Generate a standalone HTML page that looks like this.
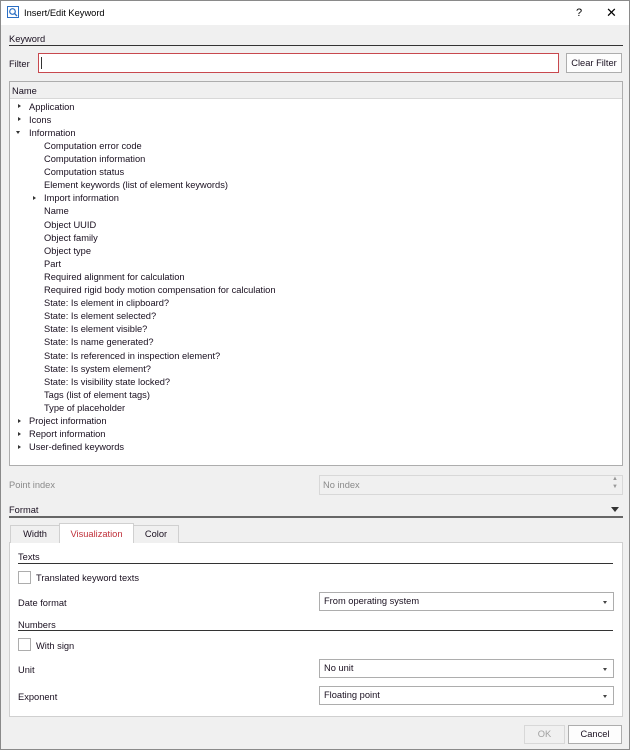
<!DOCTYPE html>
<html><head><style>
*{margin:0;padding:0;box-sizing:border-box}
body{width:630px;height:750px;background:#f0f0f0;font-family:"Liberation Sans",sans-serif;font-size:9.3px;color:#1a1020;position:relative;overflow:hidden;border:1px solid #8a8a8a}
.a{position:absolute;white-space:nowrap}
.t{position:absolute;white-space:nowrap;line-height:13.1px}
.line{position:absolute;height:1px;background:#333}
.box{position:absolute;background:#fff;border:1px solid #adadad}
.combo{position:absolute;background:#fff;border:1px solid #adadad;padding-left:4px;line-height:17px}
.combo:after{content:"";position:absolute;right:6px;top:8px;border-left:2.5px solid transparent;border-right:2.5px solid transparent;border-top:3px solid #444}
.btn{position:absolute;background:#fdfdfd;border:1px solid #adadad;text-align:center;line-height:17px}
.arr{position:absolute;width:0;height:0}
.r{border-top:2.5px solid transparent;border-bottom:2.5px solid transparent;border-left:3px solid #333}
.d{border-left:2.5px solid transparent;border-right:2.5px solid transparent;border-top:3px solid #333}
.cb{position:absolute;width:13px;height:13px;background:#fff;border:1px solid #adadad}
</style></head><body>
<div class="a" style="left:0;top:0;width:628px;height:24px;background:#fff"></div>
<svg class="a" style="left:6px;top:5px" width="12" height="12"><rect x=".5" y=".5" width="11" height="11" fill="#fff" stroke="#2b6fc4"/><circle cx="5.5" cy="5.5" r="2.8" fill="none" stroke="#2b6fc4" stroke-width="1.2"/><line x1="7.5" y1="7.5" x2="10" y2="10" stroke="#2b6fc4" stroke-width="1.3"/></svg>
<div class="a" style="left:23px;top:7px;color:#000">Insert/Edit Keyword</div>
<div class="a" style="left:575px;top:6px;font-size:11px;color:#000">?</div>
<div class="a" style="left:605px;top:4px;font-size:13px;color:#000">✕</div>

<div class="a" style="left:8px;top:33px">Keyword</div>
<div class="line" style="left:8px;top:44px;width:614px"></div>
<div class="a" style="left:8px;top:58px">Filter</div>
<div class="box" style="left:37px;top:52px;width:521px;height:20px;border-color:#c8484e"><div style="position:absolute;left:2px;top:3px;width:1px;height:12px;background:#333"></div></div>
<div class="btn" style="left:565px;top:52px;width:56px;height:20px;line-height:18px">Clear Filter</div>

<div class="box" style="left:8px;top:80px;width:614px;height:385px"></div>
<div class="a" style="left:9px;top:81px;width:612px;height:17px;background:#f0f0f0;border-bottom:1px solid #d8d8d8"></div>
<div class="a" style="left:11px;top:85px">Name</div>
<div class="arr r" style="left:17px;top:103px"></div>
<div class="arr r" style="left:17px;top:116px"></div>
<div class="arr d" style="left:15px;top:130px"></div>
<div class="arr r" style="left:32px;top:195px"></div>
<div class="arr r" style="left:17px;top:418px"></div>
<div class="arr r" style="left:17px;top:431px"></div>
<div class="arr r" style="left:17px;top:444px"></div>
<div class="t" style="left:28px;top:100px">Application<br>Icons<br>Information</div>
<div class="t" style="left:43px;top:139px">Computation error code<br>Computation information<br>Computation status<br>Element keywords (list of element keywords)<br>Import information<br>Name<br>Object UUID<br>Object family<br>Object type<br>Part<br>Required alignment for calculation<br>Required rigid body motion compensation for calculation<br>State: Is element in clipboard?<br>State: Is element selected?<br>State: Is element visible?<br>State: Is name generated?<br>State: Is referenced in inspection element?<br>State: Is system element?<br>State: Is visibility state locked?<br>Tags (list of element tags)<br>Type of placeholder</div>
<div class="t" style="left:28px;top:414px">Project information<br>Report information<br>User-defined keywords</div>

<div class="a" style="left:8px;top:479px;color:#8a8a8a">Point index</div>
<div class="a" style="left:318px;top:474px;width:304px;height:20px;border:1px solid #d8d8d8;background:#f0f0f0;color:#8a8a8a;padding-left:3px;line-height:18px">No index</div>
<div class="a" style="left:611px;top:474px;font-size:6px;color:#999;line-height:8px">▲<br>▼</div>
<div class="a" style="left:8px;top:504px">Format</div>
<div class="arr" style="left:610px;top:506px;border-left:4px solid transparent;border-right:4px solid transparent;border-top:5px solid #333"></div>
<div class="line" style="left:8px;top:515px;width:614px;height:2px;background:#666"></div>

<div class="box" style="left:8px;top:541px;width:614px;height:175px;border-color:#d0d0d0"></div>
<div class="a" style="left:9px;top:524px;width:50px;height:18px;background:#f0f0f0;border:1px solid #d0d0d0;border-bottom:none;text-align:center;line-height:17px">Width</div>
<div class="a" style="left:58px;top:522px;width:75px;height:20px;background:#fff;border:1px solid #d0d0d0;border-bottom:none;text-align:center;line-height:20px;color:#c0303a">Visualization</div>
<div class="a" style="left:132px;top:524px;width:46px;height:18px;background:#f0f0f0;border:1px solid #d0d0d0;border-bottom:none;text-align:center;line-height:17px">Color</div>

<div class="a" style="left:17px;top:551px">Texts</div>
<div class="line" style="left:17px;top:562px;width:595px"></div>
<div class="cb" style="left:17px;top:570px"></div>
<div class="a" style="left:35px;top:572px">Translated keyword texts</div>
<div class="a" style="left:17px;top:597px">Date format</div>
<div class="combo" style="left:318px;top:591px;width:295px;height:19px">From operating system</div>
<div class="a" style="left:17px;top:619px">Numbers</div>
<div class="line" style="left:17px;top:629px;width:595px"></div>
<div class="cb" style="left:17px;top:637px"></div>
<div class="a" style="left:35px;top:640px">With sign</div>
<div class="a" style="left:17px;top:664px">Unit</div>
<div class="combo" style="left:318px;top:658px;width:295px;height:19px">No unit</div>
<div class="a" style="left:17px;top:691px">Exponent</div>
<div class="combo" style="left:318px;top:685px;width:295px;height:19px">Floating point</div>

<div class="btn" style="left:523px;top:724px;width:41px;height:19px;background:#f0f0f0;border-color:#d8d8d8;color:#a0a0a0">OK</div>
<div class="btn" style="left:567px;top:724px;width:54px;height:19px">Cancel</div>
</body></html>
